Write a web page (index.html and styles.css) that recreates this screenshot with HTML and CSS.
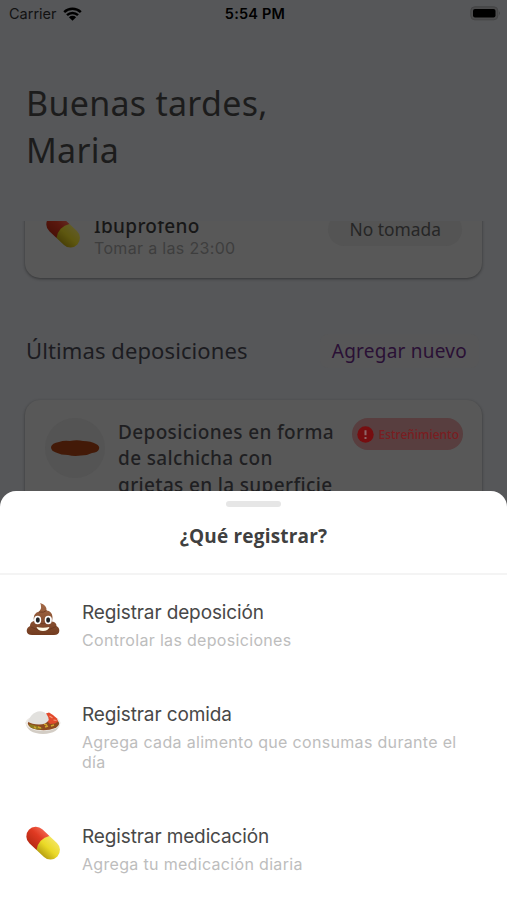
FILE: index.html
```html
<!DOCTYPE html>
<html lang="es">
<head>
    <meta charset="UTF-8">
    <meta name="viewport" content="width=device-width, initial-scale=1.0">
    <link rel="stylesheet" href="styles.css">
    <title>Inicio</title>
</head>
<body>

<svg width="0" height="0" class="defs">
    <defs>
        <linearGradient id="redHalf" x1="0" y1="0" x2="0" y2="1">
            <stop offset="0" stop-color="#f0604a"/>
            <stop offset="0.4" stop-color="#e03a22"/>
            <stop offset="1" stop-color="#b82a14"/>
        </linearGradient>
        <linearGradient id="yellowHalf" x1="0" y1="0" x2="0" y2="1">
            <stop offset="0" stop-color="#f3e45c"/>
            <stop offset="0.5" stop-color="#ead926"/>
            <stop offset="1" stop-color="#b9a212"/>
        </linearGradient>
        <linearGradient id="brown" x1="0" y1="0" x2="0" y2="1">
            <stop offset="0" stop-color="#a46a48"/>
            <stop offset="1" stop-color="#733c20"/>
        </linearGradient>
        <symbol id="pill" viewBox="0 0 36 36" overflow="visible">
            <g transform="rotate(43 18 18)">
                <path d="M18 8.5H8.2a9.5 9.5 0 0 0 0 19H18z" fill="url(#redHalf)"/>
                <path d="M18 8.5h10.2a9.5 9.5 0 0 1 0 19H18a16 16 0 0 1 0-19z" fill="url(#yellowHalf)"/>
            </g>
        </symbol>
    </defs>
</svg>

<div class="home">
    <div class="status-bar">
        <div class="carrier">
            <span>Carrier</span>
            <svg width="19" height="14" viewBox="0 0 19 14">
                <path d="M1.2 5.2a12 12 0 0 1 16.6 0M4 8.2a8 8 0 0 1 11 0" fill="none" stroke="#000" stroke-width="2.5"/>
                <path d="M5.9 10.2a5.2 5.2 0 0 1 7.2 0L9.5 13.8z" fill="#000"/>
            </svg>
        </div>
        <div class="clock">5:54 PM</div>
        <div class="battery">
            <svg width="31" height="15" viewBox="0 0 31 15">
                <rect x="0.8" y="0.8" width="27" height="13" rx="4" fill="#4c4c4d" stroke="#444445"/>
                <rect x="3" y="3" width="22.5" height="8.6" rx="2" fill="#000"/>
                <path d="M29.2 5.2q1.6 2 0 4.2z" fill="#3a3a3b"/>
            </svg>
        </div>
    </div>

    <h1 class="greeting"><span>Buenas tardes,</span><br>Maria</h1>

    <div class="scroll">
        <div class="card med-card">
            <svg class="med-icon" width="36" height="36"><use href="#pill"/></svg>
            <div class="med-text">
                <div class="med-name">Ibuprofeno</div>
                <div class="med-time">Tomar a las 23:00</div>
            </div>
            <div class="chip">No tomada</div>
        </div>

        <div class="section-head">
            <h2>Últimas deposiciones</h2>
            <a class="add-link">Agregar nuevo</a>
        </div>

        <div class="card depo-card">
            <div class="depo-icon">
                <svg width="50" height="18" viewBox="0 0 50 18">
                    <path d="M1 8Q2 4 9 3Q14 1 20 2Q27 0.5 33 2Q41 2 46 5Q50 7 49 10Q48 13.5 42 14Q37 16.5 31 16.5Q24 17.5 18 16Q11 16 6 13.5Q1 12 1 8z" fill="#431a08"/>
                </svg>
            </div>
            <div class="depo-text">Deposiciones en forma de salchicha con grietas en la superficie</div>
            <div class="alert">
                <svg width="17" height="17" viewBox="0 0 17 17">
                    <circle cx="8.5" cy="8.5" r="8.2" fill="#760e10"/>
                    <path d="M8.5 4.2v5M8.5 11v2" stroke="#8d6668" stroke-width="2"/>
                </svg>
                <span>Estreñimiento</span>
            </div>
        </div>
    </div>
</div>

<div class="sheet">
    <div class="handle"></div>
    <div class="sheet-title"><span>¿Qué registrar?</span></div>
    <div class="option">
        <svg class="option-icon" width="36" height="36" viewBox="0 0 36 36">
            <path d="M15.2 2Q22 4 21.5 9.5Q27 10 27.5 16Q27.5 18.5 27 20.5Q31.5 21 31.5 25Q34.5 26.5 34.3 30Q34 34 29 34H7Q2 34 1.7 30Q1.7 26.5 5 25Q5 21 9 20Q7.5 12.5 14 10.5Q17.5 7 15.2 2z" fill="url(#brown)"/>
            <path d="M14 11Q19 12 21.5 9.5M9 20.5Q18 25 27 20.5M6 26Q18 33 31 25.5" fill="none" stroke="#69371f" stroke-width="0.8"/>
            <ellipse cx="12.6" cy="19" rx="3.6" ry="4.2" fill="#fff"/>
            <ellipse cx="23.3" cy="19" rx="3.6" ry="4.2" fill="#fff"/>
            <ellipse cx="12.8" cy="19" rx="2" ry="2.7" fill="#202326"/>
            <ellipse cx="23.1" cy="19" rx="2" ry="2.7" fill="#202326"/>
            <path d="M11.5 26Q18 27.5 24.5 26Q23 30 18 30Q13 30 11.5 26z" fill="#fffbe8"/>
        </svg>
        <div class="option-text">
            <div class="option-name"><span>Registrar deposición</span></div>
            <div class="option-desc"><span>Controlar las deposiciones</span></div>
        </div>
    </div>
    <div class="option">
        <svg class="option-icon" width="36" height="36" viewBox="0 -2 36 36">
            <path d="M0.5 17.5Q2 28.5 18 29Q34 28.5 35.3 17.5z" fill="#d3cdc5"/>
            <ellipse cx="18" cy="18" rx="17.4" ry="8" fill="#eeeae5"/>
            <ellipse cx="18.5" cy="18.5" rx="15.6" ry="6.8" fill="#8d4a20"/>
            <path d="M4 19Q12 20 18 23.5Q13 25.5 8 23.5Q4 22 4 19z" fill="#8c7a20"/>
            <path d="M21 8.5l3-1 4 2.5 4 3.5 1 3-3 2-5 .5-3-3z" fill="#e2492c"/>
            <path d="M24.5 11l3 2M28.5 15l3 .5" stroke="#f59a7a" stroke-width="1.2"/>
            <path d="M9 22l2 1M13 22l3 1M20 22l3-1M19 19l3 1M26 21l3-1" stroke="#d0a42c" stroke-width="1.6"/>
            <path d="M2.5 16.5Q4 14 6 11Q11 5.5 17 6.5Q23 8 23.8 15Q21 19.5 14 19.5Q7 19.5 2.5 16.5z" fill="#e2e1de"/>
        </svg>
        <div class="option-text">
            <div class="option-name"><span>Registrar comida</span></div>
            <div class="option-desc"><span>Agrega cada alimento que consumas durante el día</span></div>
        </div>
    </div>
    <div class="option">
        <svg class="option-icon" width="36" height="36"><use href="#pill"/></svg>
        <div class="option-text">
            <div class="option-name"><span>Registrar medicación</span></div>
            <div class="option-desc"><span>Agrega tu medicación diaria</span></div>
        </div>
    </div>
</div>

</body>
</html>
```
FILE: styles.css
```css
* {
    box-sizing: border-box;
}
body {
    margin: 0;
    height: 900px;
    overflow: hidden;
    position: relative;
    background-color: #565759;
    font-family: "Noto Sans", "Open Sans", sans-serif;
}
.defs {
    position: absolute;
}
.home {
    height: 520px;
    overflow: hidden;
    display: flex;
    flex-direction: column;
}
.status-bar {
    display: flex;
    align-items: center;
    height: 27px;
    padding: 0 6px 0 9px;
    font-family: Inter, sans-serif;
    font-size: 14.5px;
    color: #121212;
}
.carrier,
.battery {
    flex: 1;
    display: flex;
    align-items: center;
    gap: 6px;
}
.battery {
    justify-content: flex-end;
}
.clock {
    font-weight: 600;
    letter-spacing: 0.2px;
    color: #000;
}
.greeting {
    margin: 53px 26px 0;
    font-size: 34px;
    line-height: 47px;
    font-weight: 400;
    letter-spacing: 0.28px;
    color: #1c1c1c;
}
.scroll {
    margin-top: 47px;
    height: 299px;
    overflow: hidden;
    padding: 0 25px;
}
.card {
    background-color: #585858;
    border-radius: 15px;
    box-shadow: 0 1px 3px rgba(0, 0, 0, 0.4);
}
.med-card {
    display: flex;
    align-items: center;
    height: 95px;
    margin-top: -38px;
    padding: 0 20px;
}
.med-icon {
    overflow: visible;
    filter: brightness(0.4);
}
.med-text {
    flex: 1;
    margin-left: 13px;
    padding-top: 11px;
}
.med-name {
    font-size: 19px;
    line-height: 23px;
    font-weight: 500;
    letter-spacing: 0.3px;
    color: #171717;
}
.med-time {
    font-family: Inter, sans-serif;
    font-size: 16px;
    line-height: 20px;
    letter-spacing: 0.33px;
    color: #3e3e3e;
}
.chip {
    margin-bottom: 2px;
    padding: 0 21px;
    border-radius: 17px;
    background-color: #545454;
    font-size: 17.4px;
    line-height: 33px;
    color: #262626;
}
.section-head {
    display: flex;
    justify-content: space-between;
    align-items: center;
    height: 122px;
    padding: 23px 0 0;
}
.section-head h2 {
    margin: 0 0 2px 1px;
    font-size: 22px;
    font-weight: 400;
    letter-spacing: 0.1px;
    color: #1c1c21;
}
.add-link {
    margin-right: 3px;
    padding: 4px 12px;
    border-radius: 8px;
    background-color: #575758;
    font-size: 19px;
    font-weight: 400;
    letter-spacing: 0.24px;
    color: #2a1035;
}
.depo-card {
    display: flex;
    align-items: flex-start;
    height: 180px;
    padding: 18px 19px 18px 20px;
}
.depo-icon {
    display: flex;
    justify-content: center;
    align-items: center;
    width: 60px;
    height: 60px;
    border-radius: 50%;
    background-color: #545454;
}
.depo-text {
    flex: 1;
    margin: 1px 12px 0 13px;
    font-size: 19px;
    line-height: 26.4px;
    font-weight: 500;
    letter-spacing: 0.35px;
    color: #1f1f22;
}
.alert {
    display: flex;
    align-items: center;
    gap: 4px;
    height: 32px;
    padding: 0 4px 0 5px;
    border-radius: 16px;
    background-color: #583e3f;
    font-size: 12px;
    font-weight: 500;
    color: #7a1d21;
}
.sheet {
    position: absolute;
    left: 0;
    right: 0;
    bottom: 0;
    height: 409px;
    background-color: #fff;
    border-radius: 16px 16px 0 0;
}
.handle {
    width: 55px;
    height: 6px;
    margin: 10px auto 0;
    border-radius: 3px;
    background-color: #e6e6e6;
}
.sheet-title {
    height: 68px;
    padding-top: 15px;
    border-bottom: 2px solid #f4f4f4;
    text-align: center;
    font-family: "Open Sans", sans-serif;
    font-size: 19px;
    line-height: 28px;
    font-weight: 700;
    letter-spacing: 0.2px;
    color: #404040;
}
.option {
    display: flex;
    padding: 26px 25px;
    font-family: Inter, sans-serif;
}
.option-icon {
    flex: none;
    overflow: visible;
}
.option-text {
    margin-left: 21px;
    max-width: 385px;
}
.option-name {
    font-size: 19px;
    line-height: 24px;
    letter-spacing: -0.12px;
    color: #484848;
}
.option-desc {
    margin-top: 5px;
    font-size: 16px;
    line-height: 20.5px;
    letter-spacing: 0.32px;
    color: #bdbdbd;
}
```
